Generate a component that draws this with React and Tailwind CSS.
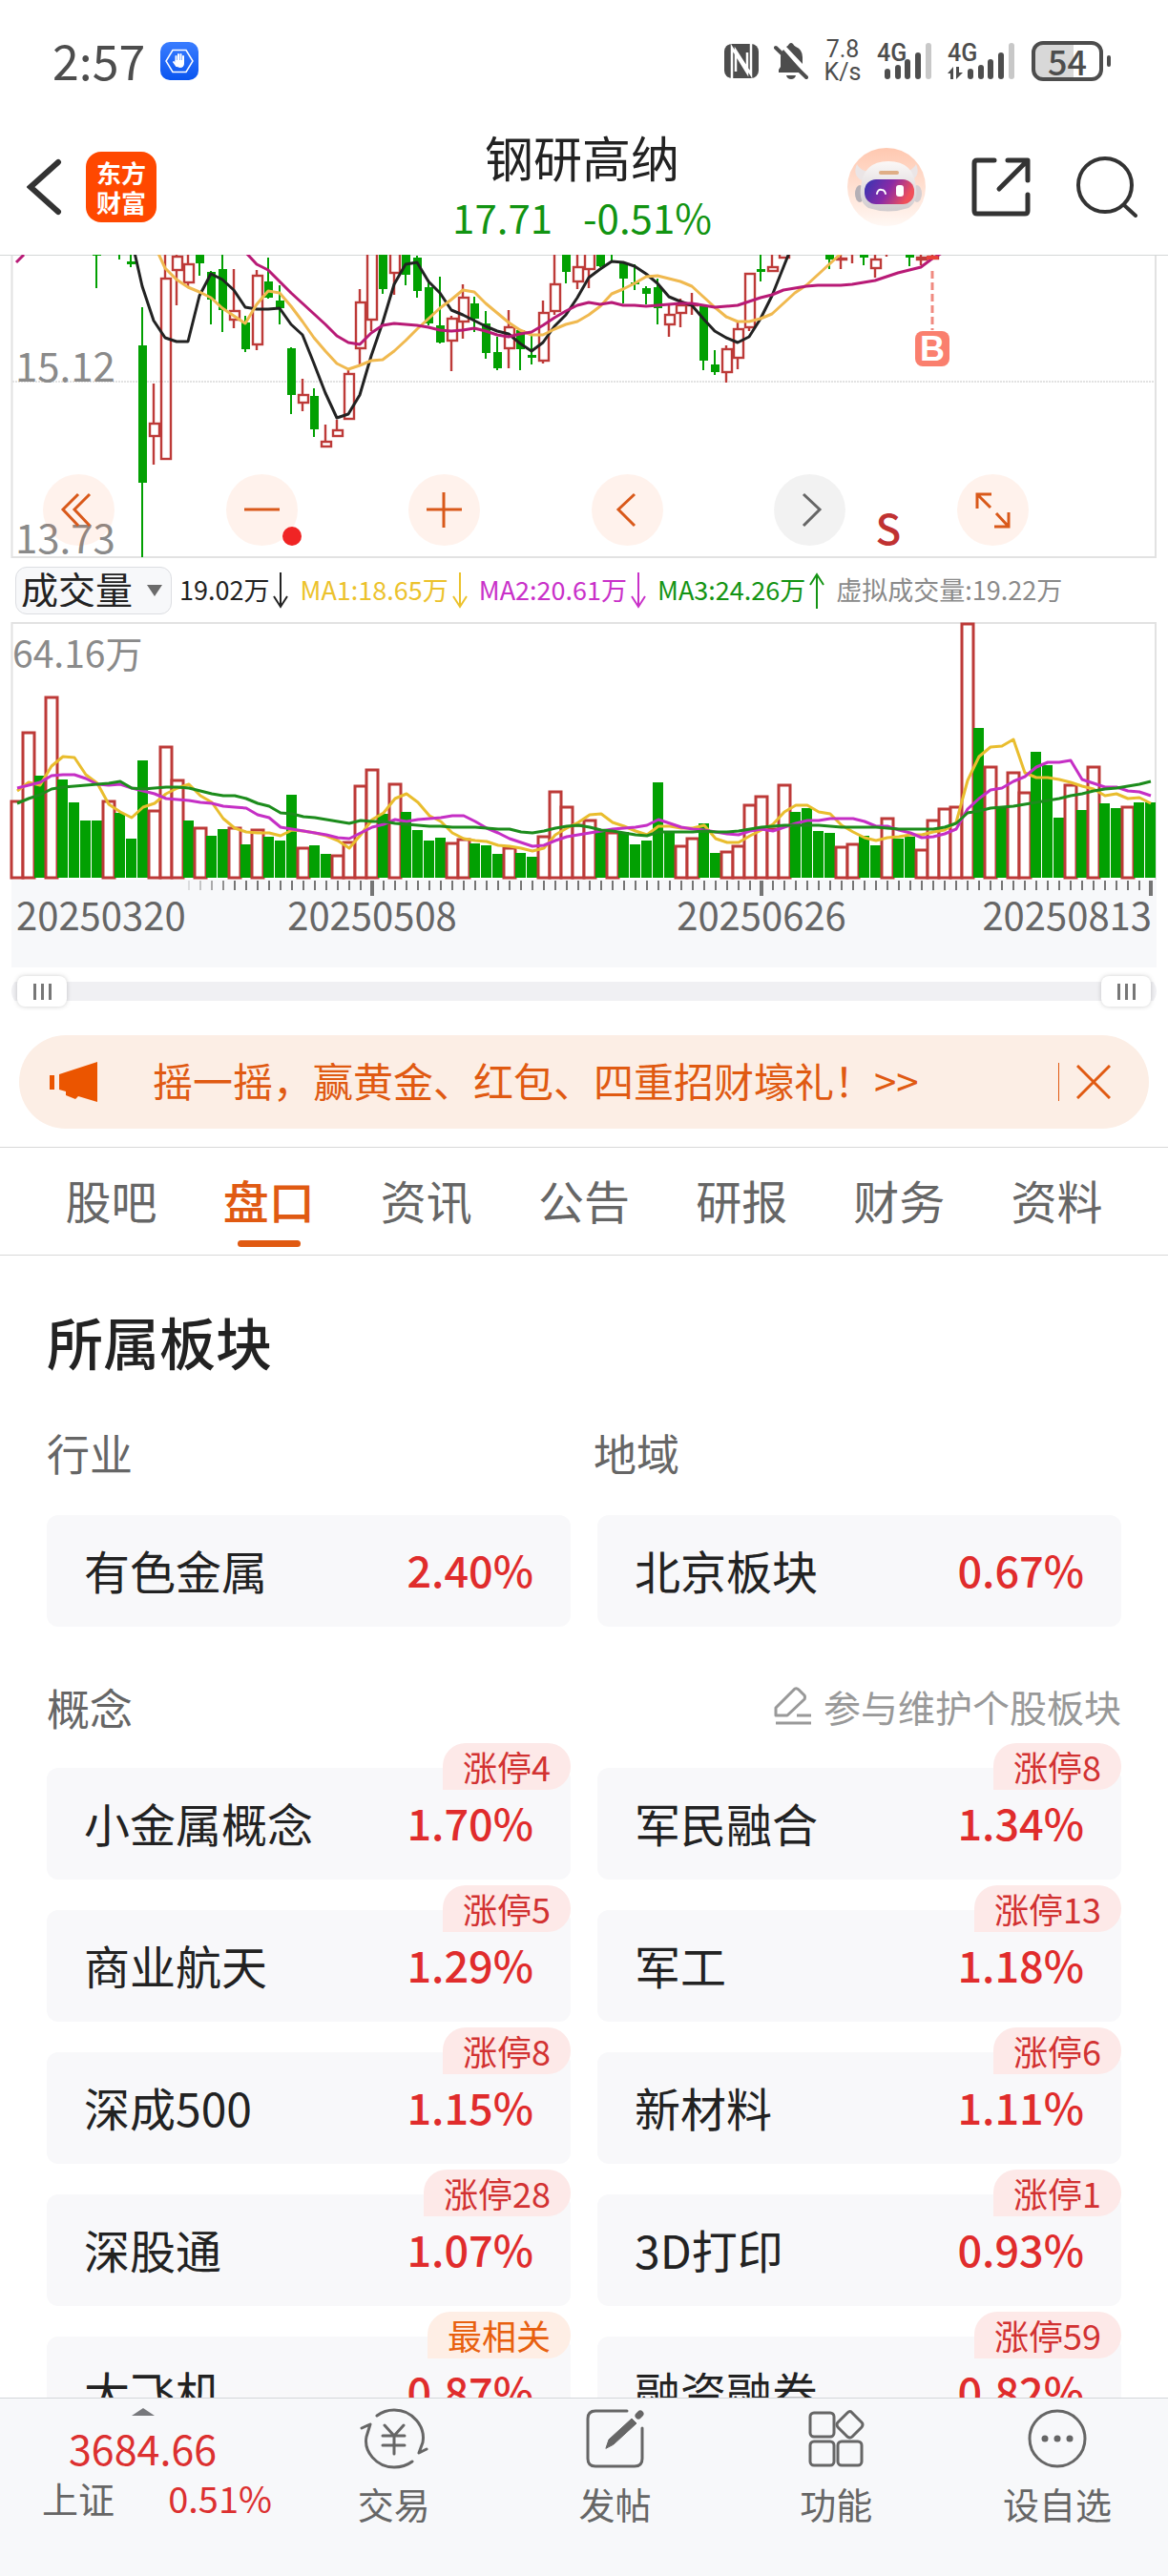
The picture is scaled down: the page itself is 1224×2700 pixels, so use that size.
import { useState } from "react";

// [index, direction, high, bodyTop, bodyBottom, low]
const CANDLES = [
  [7, "g", 250, 250, 268, 302],
  [9, "g", 250, 250, 252, 272],
  [10, "g", 250, 274, 277, 280],
  [11, "g", 322, 362, 506, 584],
  [12, "r", 402, 444, 457, 487],
  [13, "r", 250, 292, 481, 481],
  [14, "r", 250, 269, 283, 320],
  [15, "r", 250, 277, 296, 300],
  [16, "g", 250, 250, 276, 289],
  [17, "g", 284, 285, 314, 340],
  [18, "g", 250, 282, 325, 348],
  [19, "r", 282, 326, 335, 344],
  [20, "g", 331, 338, 366, 369],
  [21, "r", 283, 289, 361, 367],
  [22, "g", 270, 295, 312, 313],
  [23, "g", 299, 315, 323, 340],
  [24, "g", 364, 365, 414, 434],
  [25, "r", 397, 414, 422, 431],
  [26, "g", 407, 415, 450, 458],
  [27, "r", 445, 463, 468, 469],
  [28, "r", 440, 451, 457, 458],
  [29, "r", 388, 392, 439, 439],
  [30, "r", 303, 317, 365, 384],
  [31, "r", 250, 250, 335, 347],
  [32, "g", 250, 250, 303, 308],
  [33, "r", 250, 250, 286, 309],
  [34, "g", 250, 250, 288, 299],
  [35, "g", 268, 270, 305, 312],
  [36, "g", 293, 301, 339, 341],
  [37, "g", 290, 341, 359, 360],
  [38, "r", 331, 334, 357, 389],
  [39, "r", 298, 312, 337, 355],
  [40, "g", 311, 318, 334, 348],
  [41, "g", 326, 339, 370, 376],
  [42, "g", 353, 369, 386, 388],
  [43, "r", 325, 343, 365, 386],
  [44, "g", 345, 346, 366, 388],
  [45, "g", 352, 372, 375, 382],
  [46, "r", 315, 328, 378, 381],
  [47, "r", 250, 298, 326, 330],
  [48, "g", 250, 250, 285, 297],
  [49, "r", 250, 280, 295, 303],
  [50, "r", 250, 250, 282, 302],
  [51, "g", 250, 250, 279, 280],
  [52, "g", 250, 250, 252, 273],
  [53, "g", 274, 275, 292, 318],
  [54, "g", 277, 296, 298, 304],
  [55, "g", 300, 302, 308, 319],
  [56, "g", 292, 301, 323, 340],
  [57, "r", 320, 330, 340, 353],
  [58, "r", 313, 320, 328, 343],
  [59, "r", 307, 319, 320, 330],
  [60, "g", 320, 320, 378, 388],
  [61, "g", 367, 382, 390, 393],
  [62, "r", 362, 366, 390, 401],
  [63, "r", 338, 345, 375, 387],
  [64, "r", 286, 287, 343, 347],
  [65, "g", 250, 282, 285, 295],
  [66, "r", 250, 280, 284, 285],
  [67, "r", 250, 250, 270, 270],
  [71, "g", 250, 250, 272, 282],
  [72, "r", 250, 271, 272, 282],
  [73, "r", 250, 250, 252, 276],
  [74, "g", 250, 250, 270, 278],
  [75, "r", 250, 272, 281, 291],
  [76, "r", 250, 250, 252, 269],
  [78, "g", 250, 250, 270, 279],
  [79, "r", 250, 270, 272, 278],
  [80, "r", 250, 269, 271, 271],
];

const PRICE_LINES = [
  {
    color: "#222222",
    start: 10,
    ys: [247, 300, 336, 354, 358, 358, 310, 287, 293, 304, 322, 324, 324, 323, 340, 351, 381, 412, 438, 434, 414, 373, 338, 298, 277, 275, 295, 307, 325, 330, 336, 342, 347, 350, 360, 368, 359, 342, 330, 312, 291, 282, 274, 275, 279, 287, 297, 311, 316, 320, 334, 347, 354, 359, 353, 334, 310, 280, 250],
  },
  {
    color: "#f0b94f",
    start: 12,
    ys: [255, 281, 293, 301, 306, 312, 323, 331, 339, 319, 305, 307, 321, 337, 354, 368, 381, 387, 383, 378, 377, 368, 357, 345, 334, 323, 314, 304, 306, 318, 328, 338, 346, 351, 351, 345, 340, 337, 330, 321, 308, 303, 297, 290, 289, 292, 295, 300, 311, 322, 332, 337, 337, 334, 329, 318, 307, 299, 288, 277, 266],
  },
  {
    color: "#b81a76",
    start: 20,
    ys: [264, 277, 283, 295, 307, 318, 329, 340, 352, 359, 361, 349, 341, 339, 340, 341, 343, 346, 347, 346, 344, 347, 351, 353, 350, 348, 341, 333, 326, 320, 317, 319, 317, 320, 320, 321, 320, 319, 318, 318, 320, 322, 321, 320, 316, 312, 309, 304, 302, 300, 299, 299, 299, 298, 296, 294, 290, 286, 283, 280, 271, 264],
  },
];

const VOLUME_TOPS = [
  839, 767, 813, 730, 817, 841, 860, 860, 839, 852, 879, 797, 849, 782, 817, 860, 867, 876, 869, 867,
  885, 869, 877, 881, 833, 888, 886, 895, 896, 882, 823, 806, 853, 821, 851, 870, 881, 878, 883, 879,
  884, 886, 895, 888, 894, 898, 876, 829, 845, 864, 859, 871, 872, 872, 885, 881, 820, 872, 886, 878,
  863, 894, 892, 886, 843, 834, 868, 822, 851, 847, 871, 873, 887, 884, 876, 886, 857, 879, 877, 890,
  859, 847, 845, 653, 763, 803, 845, 809, 830, 788, 802, 857, 822, 849, 803, 842, 847, 845, 841, 841,
];

const VOLUME_DIRS =
  "rrgrggggrg" +
  "ggrrrgrggr" +
  "grgggrggrr" +
  "rrgrggggrr" +
  "gggrggrrrr" +
  "rgrggggg" +
  "rrggrrrrrr" +
  "ggggrrggrg" +
  "grrrrrgrgr" +
  "rgggrgrggrgg";

const VOLUME_LINES = [
  {
    color: "#e9bd2e",
    ys: [829, 820, 823, 803, 793, 794, 812, 821, 843, 851, 857, 846, 842, 832, 826, 822, 834, 841, 858, 868, 872, 873, 873, 876, 870, 871, 873, 876, 881, 889, 875, 859, 852, 837, 832, 841, 855, 861, 873, 879, 881, 882, 886, 887, 889, 892, 889, 875, 868, 862, 854, 853, 862, 866, 871, 875, 866, 866, 868, 868, 865, 879, 883, 883, 876, 870, 864, 851, 844, 844, 851, 853, 865, 872, 878, 881, 878, 877, 875, 875, 872, 870, 862, 818, 793, 783, 782, 775, 810, 815, 815, 817, 820, 824, 827, 834, 832, 837, 836, 842],
  },
  {
    color: "#c52fc5",
    ys: [826, 823, 820, 813, 812, 812, 816, 822, 823, 822, 826, 829, 832, 837, 838, 839, 841, 842, 845, 846, 847, 854, 857, 867, 869, 871, 873, 875, 878, 879, 873, 867, 864, 859, 861, 859, 858, 857, 855, 855, 861, 868, 873, 879, 883, 887, 886, 881, 877, 875, 873, 871, 869, 868, 867, 865, 859, 863, 867, 869, 870, 872, 874, 875, 871, 869, 871, 867, 863, 860, 860, 858, 858, 858, 861, 866, 866, 870, 873, 878, 877, 874, 869, 848, 837, 828, 826, 819, 814, 804, 799, 799, 797, 817, 821, 825, 825, 829, 830, 834],
  },
  {
    color: "#1c8c1c",
    ys: [842, 837, 833, 827, 825, 824, 823, 822, 821, 819, 826, 827, 826, 825, 825, 826, 829, 832, 834, 834, 837, 842, 845, 852, 853, 856, 857, 859, 861, 863, 860, 861, 861, 863, 864, 865, 866, 866, 867, 867, 867, 868, 869, 869, 872, 873, 871, 868, 866, 865, 867, 870, 871, 873, 875, 876, 872, 872, 872, 872, 871, 872, 872, 871, 869, 867, 866, 865, 865, 865, 865, 866, 867, 867, 867, 867, 868, 869, 869, 869, 869, 867, 863, 852, 850, 847, 846, 845, 843, 841, 839, 837, 834, 832, 829, 827, 826, 824, 822, 819],
  },
];

const TABS = ["股吧", "盘口", "资讯", "公告", "研报", "财务", "资料"];

const CONCEPTS = [
  { name: "小金属概念", change: "1.70%", tag: "涨停4" },
  { name: "军民融合", change: "1.34%", tag: "涨停8" },
  { name: "商业航天", change: "1.29%", tag: "涨停5" },
  { name: "军工", change: "1.18%", tag: "涨停13" },
  { name: "深成500", change: "1.15%", tag: "涨停8" },
  { name: "新材料", change: "1.11%", tag: "涨停6" },
  { name: "深股通", change: "1.07%", tag: "涨停28" },
  { name: "3D打印", change: "0.93%", tag: "涨停1" },
  { name: "大飞机", change: "0.87%", tag: "最相关", hot: true },
  { name: "融资融券", change: "0.82%", tag: "涨停59" },
];

const RED = "#bd3a38";
const GREEN = "#02a002";

const toPoints = (ys, offset, start = 0) =>
  ys.map((y, i) => `${offset + 12 * (start + i)},${y}`).join(" ");

function SignalBars({ x }) {
  return (
    <g transform={`translate(${x} 0)`}>
      <rect x="0" y="28" width="6" height="11" rx="3" />
      <rect x="11" y="24" width="6" height="15" rx="3" />
      <rect x="21" y="18" width="6" height="21" rx="3" />
      <rect x="32" y="11" width="6" height="28" rx="3" />
      <rect x="43" y="1" width="6" height="38" rx="3" fill="#c8c8c8" />
    </g>
  );
}

function StatusBar() {
  return (
    <div className="flex h-[124px] items-center justify-between pt-1 pr-[60px] pl-[55px] text-[#4d4d4d]">
      <div className="flex items-center gap-4">
        <span className="pb-1 text-[50px] leading-none">2:57</span>
        <svg viewBox="0 0 40 40" className="size-10">
          <defs>
            <linearGradient id="blue" x1="0" y1="0" x2="0" y2="1">
              <stop offset="0" stopColor="#3a7dff" />
              <stop offset="1" stopColor="#0a55f0" />
            </linearGradient>
          </defs>
          <rect width="40" height="40" rx="10" fill="url(#blue)" />
          <path d="M13 8.500h14L34 20l-7 11.500H13L6 20z" fill="none" stroke="#fff" strokeWidth="1.500" />
          <path
            d="M16.500 21v-6M19 20v-7M21.500 20v-7M24 21v-6M14 21l3 4h6l1-4"
            stroke="#fff"
            strokeWidth="2"
            strokeLinecap="round"
            fill="none"
          />
          <path d="M15.500 19h9.500v3q0 5-4.500 5-3 0-5-3z" fill="#fff" />
        </svg>
      </div>
      <div className="flex items-center gap-4">
        <svg viewBox="0 0 36 36" className="size-9">
          <rect width="36" height="36" rx="8" fill="#4d4d4d" />
          <path d="M8 36V4l16 26V9M28 0v32L12 7v22" fill="none" stroke="#fff" strokeWidth="2.500" />
        </svg>
        <svg viewBox="0 0 36 40" className="h-10 w-9" fill="#4d4d4d">
          <path d="M5 29l2-3V15q0-4 3-7l21 24H5zM13 5q2-1 3-3 2-2 4 0 1 2 3 3 7 3 7 11v7z" />
          <path d="M13 35h10q-1 4-5 4t-5-4z" />
          <path d="M2 6l32 31" stroke="#4d4d4d" strokeWidth="4" strokeLinecap="round" />
        </svg>
        <div className="flex w-10 flex-col items-center font-['Roboto'] text-[25px] leading-[24px]">
          <span>7.8</span>
          <span>K/s</span>
        </div>
        <svg viewBox="0 0 58 40" className="h-10 w-[58px] overflow-visible" fill="#4d4d4d">
          <text x="0" y="20" fontSize="25" fontWeight="500" className="font-['Roboto']">
            4G
          </text>
          <SignalBars x={8} />
        </svg>
        <svg viewBox="0 0 72 40" className="h-10 w-[72px] overflow-visible" fill="#4d4d4d">
          <text x="0" y="20" fontSize="25" fontWeight="500" className="font-['Roboto']">
            4G
          </text>
          <path d="M0 33l6-7v13H3v-6zM9 26h3v6h4l-7 7z" />
          <SignalBars x={21} />
        </svg>
        <div className="flex items-center gap-1">
          <div className="h-[42px] w-[75px] rounded-xl border-4 border-[#4d4d4d] bg-[linear-gradient(90deg,#d8d8d8_60%,#ffffff_60%)] text-center text-[36px] leading-[32px] font-medium">
            54
          </div>
          <div className="h-3 w-1 rounded-full bg-[#4d4d4d]" />
        </div>
      </div>
    </div>
  );
}

function RobotIcon() {
  return (
    <svg viewBox="0 0 82 82" className="size-[82px]">
      <defs>
        <linearGradient id="peach" x1="0" y1="0" x2="0" y2="1">
          <stop offset="0" stopColor="#ffc8b0" />
          <stop offset="1" stopColor="#fff8f4" />
        </linearGradient>
        <linearGradient id="visor" x1="0" y1="0" x2="1" y2="0.300">
          <stop offset="0" stopColor="#3236b4" />
          <stop offset="0.550" stopColor="#8a2aa6" />
          <stop offset="1" stopColor="#f0505a" />
        </linearGradient>
        <linearGradient id="shell" x1="0" y1="0" x2="0" y2="1">
          <stop offset="0" stopColor="#fbf8f7" />
          <stop offset="1" stopColor="#d0cbce" />
        </linearGradient>
      </defs>
      <circle cx="41" cy="41" r="41" fill="url(#peach)" />
      <path d="M10 17q-5 12 5 17l9-9q-11-1-14-8zM72 17q5 12-5 17l-9-9q11-1 14-8z" fill="#ebe5e6" />
      <ellipse cx="13" cy="48" rx="5" ry="9" fill="#b5b0b6" />
      <ellipse cx="73" cy="48" rx="5" ry="9" fill="#d5cfd2" />
      <path d="M14 42Q16 14 43 14t29 28q2 15-8 21-21 7-42 0-10-6-8-21z" fill="url(#shell)" />
      <rect x="33" y="24" width="21" height="4" rx="2" fill="#dfae86" />
      <rect x="18" y="33" width="52" height="26" rx="12" fill="url(#visor)" />
      <path d="M31 48q1-5 5-4 3 0 4 4" fill="none" stroke="#fff" strokeWidth="2" strokeLinecap="round" />
      <rect x="51" y="39" width="8" height="12" rx="3" fill="#fff" />
    </svg>
  );
}

function Header() {
  return (
    <header className="grid h-[143px] grid-cols-[1fr_auto_1fr] items-center pr-8 pl-7">
      <div className="flex items-center gap-6">
        <button aria-label="返回">
          <svg viewBox="0 0 38 60" className="h-[60px] w-[38px]" fill="none" stroke="#333" strokeWidth="6" strokeLinecap="round">
            <path d="M33 4L4 30l29 26" />
          </svg>
        </button>
        <a
          href="#home"
          className="flex size-[74px] flex-col items-center justify-center rounded-2xl bg-[#ff4800] text-[26px] leading-[31px] font-bold text-white"
        >
          <span>东方</span>
          <span>财富</span>
        </a>
      </div>
      <div className="pb-1 text-center">
        <h1 className="text-[51px] leading-[66px] text-[#222]">钢研高纳</h1>
        <p className="flex justify-center gap-8 text-[42px] leading-[60px] text-[#129412]">
          <span>17.71</span>
          <span>-0.51%</span>
        </p>
      </div>
      <div className="flex items-center justify-end gap-12">
        <button aria-label="智能助手">
          <RobotIcon />
        </button>
        <button aria-label="分享">
          <svg viewBox="0 0 62 62" className="size-[62px]" fill="none" stroke="#333" strokeWidth="5" strokeLinecap="round" strokeLinejoin="round">
            <path d="M24 3H6Q3 3 3 6v50q0 3 3 3h50q3 0 3-3V39M38 3h21v21M58 4L29 33" />
          </svg>
        </button>
        <button aria-label="搜索">
          <svg viewBox="0 0 64 64" className="size-16" fill="none" stroke="#333" strokeWidth="4" strokeLinecap="round">
            <circle cx="30" cy="30" r="28" />
            <path d="M50 51l12 11" />
          </svg>
        </button>
      </div>
    </header>
  );
}

function Candle({ data }) {
  const [i, dir, high, top, bottom, low] = data;
  const x = 17 + 12 * i;
  if (dir === "g") {
    return (
      <g fill={GREEN}>
        <rect x={x - 1} y={high} width="2" height={low - high} />
        <rect x={x - 4} y={top} width="9" height={bottom - top} />
      </g>
    );
  }
  return (
    <g stroke={RED} strokeWidth="2.400" fill="none">
      <path d={`M${x} ${high}V${top}M${x} ${bottom}V${low}`} />
      <rect x={x - 4} y={top} width="10" height={bottom - top} />
    </g>
  );
}

function PriceChart() {
  return (
    <svg viewBox="0 267 1224 318" className="block w-full">
      <path d="M0 267.500H1224" stroke="#d4d8d8" strokeWidth="1" />
      <path d="M12.500 268V584H1211V268" fill="none" stroke="#e2e2e2" strokeWidth="2" />
      <path d="M13 400H1210" stroke="#e2e2e2" strokeWidth="2" strokeDasharray="2 1" />
      {CANDLES.map((c) => (
        <Candle key={c[0]} data={c} />
      ))}
      <path d="M17 275L25 267" stroke="#b81a76" strokeWidth="3" />
      {PRICE_LINES.map((line) => (
        <polyline
          key={line.color}
          points={toPoints(line.ys, 17, line.start)}
          fill="none"
          stroke={line.color}
          strokeWidth="3"
          strokeLinejoin="round"
        />
      ))}
      <rect x="971" y="268" width="12" height="4" fill="#e84038" />
      <path d="M977 284V346" stroke="#f08a80" strokeWidth="3" strokeDasharray="8 4" />
      <rect x="959" y="347" width="36" height="37" rx="8" fill="#fa7f6e" />
      <text x="977" y="378" textAnchor="middle" fontSize="36" fontWeight="700" fill="#fff" className="font-['Liberation_Sans']">
        B
      </text>
      <g fontSize="42" fill="#8a8a8a">
        <text x="16" y="400">15.12</text>
        <text x="16" y="580">13.73</text>
      </g>
      <text x="931" y="571" textAnchor="middle" fontSize="44" fontWeight="500" fill="#c03232">
        S
      </text>
    </svg>
  );
}

const CHART_TOOLS = [
  { label: "最左", d: "M37 21L21 37l16 17M49 21L33 37l16 17" },
  { label: "缩小", d: "M19 37h37", dot: true },
  { label: "放大", d: "M19 37h37M37 19v37" },
  { label: "左移", d: "M45 21L28 37l17 17" },
  { label: "右移", d: "M31 21l17 16-17 17", muted: true },
  { label: "全屏", d: "M21 36V21h15M22 22l13 13M39 55h15V40M53 54L41 41" },
];

function ChartTools() {
  return (
    <div className="absolute right-[146px] bottom-[13px] left-[45px] flex justify-between">
      {CHART_TOOLS.map((tool) => (
        <button
          key={tool.label}
          aria-label={tool.label}
          className={
            tool.muted
              ? "relative size-[75px] rounded-full bg-black/5 text-[#666]"
              : "relative size-[75px] rounded-full bg-[#ff5a10]/8 text-[#d9591a]"
          }
        >
          <svg viewBox="0 0 75 75" className="size-full" fill="none" stroke="currentColor" strokeWidth="3">
            <path d={tool.d} />
          </svg>
          {tool.dot && <span className="absolute -right-1 bottom-0 size-5 rounded-full bg-[#f02424]" />}
        </button>
      ))}
    </div>
  );
}

function Arrow({ up }) {
  return (
    <svg viewBox="0 0 16 40" className="h-10 w-4" fill="none" stroke="currentColor" strokeWidth="2">
      <path d={up ? "M8 39V3M1 14l7-11 7 11" : "M8 1v36M1 26l7 11 7-11"} />
    </svg>
  );
}

function IndicatorRow() {
  return (
    <div className="flex h-[67px] items-center gap-3 pl-4 text-[27px] whitespace-nowrap">
      <div className="relative -mr-1 h-[50px] w-[164px]">
        <label htmlFor="indicator" className="sr-only">
          指标
        </label>
        <select
          id="indicator"
          className="size-full appearance-none rounded-xl border border-[#dcdee2] bg-[#f7f8fa] pb-1 pl-[5px] text-[39px] leading-none text-[#222]"
        >
          <option>成交量</option>
        </select>
        <svg viewBox="0 0 16 12" className="pointer-events-none absolute top-[19px] right-[10px] h-3 w-4" fill="#6b6b6b">
          <path d="M0 0h16L8 12z" />
        </svg>
      </div>
      <span className="flex items-center gap-1 text-[#222]">
        19.02万
        <Arrow />
      </span>
      <span className="flex items-center gap-1 text-[#ecc22c]">
        MA1:18.65万
        <Arrow />
      </span>
      <span className="flex items-center gap-1 text-[#c931c9]">
        MA2:20.61万
        <Arrow />
      </span>
      <span className="flex items-center gap-1 text-[#149414]">
        MA3:24.26万
        <Arrow up />
      </span>
      <span className="text-[#8a8a8a]">虚拟成交量:19.22万</span>
    </div>
  );
}

function VolumeChart() {
  return (
    <svg viewBox="0 652 1224 363" className="block w-full">
      <rect x="12" y="922" width="1200" height="92" fill="#f7f8fa" />
      <path d="M12.500 922V653H1211V922" fill="none" stroke="#e2e2e2" strokeWidth="2" />
      <text x="13" y="700" fontSize="39" fill="#8a8a8a">
        64.16万
      </text>
      {VOLUME_TOPS.map((top, i) =>
        VOLUME_DIRS[i] === "g" ? (
          <rect key={i} x={12 + 12 * i} y={top} width="11" height={920 - top} fill={GREEN} />
        ) : (
          <rect
            key={i}
            x={12 + 12 * i}
            y={top + 1}
            width="12"
            height={919 - top}
            fill="#fff"
            stroke={RED}
            strokeWidth="3"
          />
        )
      )}
      {VOLUME_LINES.map((line) => (
        <polyline
          key={line.color}
          points={toPoints(line.ys, 18)}
          fill="none"
          stroke={line.color}
          strokeWidth="3"
          strokeLinejoin="round"
        />
      ))}
      {VOLUME_TOPS.map((_, i) => {
        if (i < 15) return null;
        const major = i === 31 || i === 65 || i === 99;
        return (
          <rect
            key={i}
            x={major ? 16 + 12 * i : 17 + 12 * i}
            y="923"
            width={major ? 4 : 2}
            height={major ? 16 : 10}
            fill="#757575"
            opacity={Math.min(1, (i - 14) / 5)}
          />
        );
      })}
      <g fontSize="40" fill="#666">
        <text x="17" y="975">20250320</text>
        <text x="390" y="975" textAnchor="middle">20250508</text>
        <text x="798" y="975" textAnchor="middle">20250626</text>
        <text x="1207" y="975" textAnchor="end">20250813</text>
      </g>
    </svg>
  );
}

const THUMB =
  "pointer-events-none absolute inset-0 m-0 h-8 w-full appearance-none bg-transparent [&::-webkit-slider-thumb]:pointer-events-auto [&::-webkit-slider-thumb]:h-8 [&::-webkit-slider-thumb]:w-[52px] [&::-webkit-slider-thumb]:appearance-none [&::-webkit-slider-thumb]:rounded-lg [&::-webkit-slider-thumb]:bg-white [&::-webkit-slider-thumb]:bg-[linear-gradient(90deg,#777_3px,transparent_3px_8px,#777_8px_11px,transparent_11px_16px,#777_16px)] [&::-webkit-slider-thumb]:bg-[length:19px_17px] [&::-webkit-slider-thumb]:bg-center [&::-webkit-slider-thumb]:bg-no-repeat [&::-webkit-slider-thumb]:shadow-[0_0_5px_rgba(0,0,0,0.2)]";

function RangeBar() {
  const [from, setFrom] = useState(0);
  const [to, setTo] = useState(100);
  return (
    <div className="mx-3 mt-2 flex h-8 items-center rounded-full bg-[linear-gradient(#f0f0f3,#f0f0f3)] bg-[length:100%_20px] bg-center bg-no-repeat px-[6px]">
      <div className="relative h-8 flex-1">
        <input
          type="range"
          aria-label="开始日期"
          value={from}
          onChange={(e) => setFrom(e.target.value)}
          className={THUMB}
        />
        <input
          type="range"
          aria-label="结束日期"
          value={to}
          onChange={(e) => setTo(e.target.value)}
          className={THUMB}
        />
      </div>
    </div>
  );
}

function Banner() {
  return (
    <div className="mx-5 mt-[30px] mb-[19px] flex h-[98px] items-center rounded-full bg-[#fceee5] pr-10 pl-8 text-[#e05a12]">
      <svg viewBox="0 0 50 42" className="h-[42px] w-[50px]" fill="#eb5500">
        <path d="M0 14h5v15H0zM10 13L50 0v42l-20-6-3 3-10-4v-4l-7-2z" />
      </svg>
      <a href="#promo" className="ml-[58px] flex-1 pb-1 text-[42px] leading-[60px] whitespace-nowrap">
        摇一摇，赢黄金、红包、四重招财壕礼！&gt;&gt;
      </a>
      <span className="mr-[18px] h-10 w-px bg-[#e05a12]" />
      <button aria-label="关闭">
        <svg viewBox="0 0 36 36" className="size-9" fill="none" stroke="currentColor" strokeWidth="3">
          <path d="M1 1l34 34M35 1L1 35" />
        </svg>
      </button>
    </div>
  );
}

function Tabs() {
  const [active, setActive] = useState("盘口");
  return (
    <div role="tablist" className="grid h-[114px] grid-cols-7 border-y border-[#d8d8d8] px-[34px]">
      {TABS.map((tab) => (
        <button
          key={tab}
          role="tab"
          aria-selected={tab === active}
          onClick={() => setActive(tab)}
          className={
            tab === active
              ? "relative pb-1 text-[48px] leading-[60px] font-medium text-[#e05a12]"
              : "relative pb-1 text-[48px] leading-[60px] text-[#666]"
          }
        >
          {tab}
          {tab === active && (
            <span className="absolute inset-x-0 bottom-2 mx-auto h-[7px] w-[66px] rounded-full bg-[#e05a12]" />
          )}
        </button>
      ))}
    </div>
  );
}

function BoardCard({ name, change, tag, hot }) {
  return (
    <a
      href="#board"
      className="relative flex h-[117px] items-center justify-between rounded-xl bg-[#f8f8fa] px-[39px] pb-1 leading-[60px]"
    >
      <span className="text-[48px] text-[#222]">{name}</span>
      <span className="text-[45px] font-medium text-[#e02c2c]">{change}</span>
      {tag && (
        <span
          className={
            hot
              ? "absolute -top-[26px] right-0 rounded-3xl rounded-bl-none bg-[#feeee5] px-[21px] text-[36px] leading-[49px] text-[#e8600f]"
              : "absolute -top-[26px] right-0 rounded-3xl rounded-bl-none bg-[#fde9e8] px-[21px] text-[36px] leading-[49px] text-[#d23232]"
          }
        >
          {tag}
        </span>
      )}
    </a>
  );
}

function Boards() {
  return (
    <section className="px-[49px] pt-[60px] pb-8">
      <h2 className="text-[59px] leading-[60px] font-medium text-[#222]">所属板块</h2>
      <div className="mt-[62px] grid grid-cols-2 gap-x-5">
        <h3 className="text-[45px] leading-[50px] text-[#666]">行业</h3>
        <h3 className="text-[45px] leading-[50px] text-[#666]">地域</h3>
      </div>
      <div className="mt-10 grid grid-cols-2 gap-x-7">
        <BoardCard name="有色金属" change="2.40%" />
        <BoardCard name="北京板块" change="0.67%" />
      </div>
      <div className="mt-[58px] flex items-center justify-between leading-[50px]">
        <h3 className="text-[45px] text-[#666]">概念</h3>
        <a href="#edit" className="flex items-center gap-3 pb-1 text-[39px] text-[#999]">
          <svg viewBox="0 0 40 40" className="size-10" fill="none" stroke="currentColor" strokeWidth="3" strokeLinejoin="round">
            <path d="M2 22L22 2q2-1 4 1l6 6q1 2 0 4L14 30H2zM24 30h15M2 38h37" />
          </svg>
          参与维护个股板块
        </a>
      </div>
      <div className="mt-9 grid grid-cols-2 gap-x-7 gap-y-8">
        {CONCEPTS.map((item) => (
          <BoardCard key={item.name} {...item} />
        ))}
      </div>
    </section>
  );
}

function NavItem({ label, children }) {
  return (
    <button className="flex flex-1 flex-col items-center gap-2 pt-[10px] text-[38px] leading-[56px] text-[#666]">
      <svg
        viewBox="0 0 72 64"
        className="h-16 w-[72px]"
        fill="none"
        stroke="currentColor"
        strokeWidth="3"
        strokeLinecap="round"
        strokeLinejoin="round"
      >
        {children}
      </svg>
      <span>{label}</span>
    </button>
  );
}

function BottomNav() {
  return (
    <nav className="flex h-[187px] shrink-0 border-t border-[#d4d6da] bg-[#f7f8fa]">
      <a href="#index" className="flex w-[297px] flex-col pt-[10px] pr-3 pl-11 text-[#dc3030]">
        <svg viewBox="0 0 24 8" className="ml-[94px] h-2 w-6" fill="#77787c">
          <path d="M0 8L12 0l12 8z" />
        </svg>
        <span className="ml-7 text-[43px] leading-[66px]">3684.66</span>
        <span className="flex items-center justify-between text-[38px] leading-[40px]">
          <span className="text-[#666]">上证</span>
          <span>0.51%</span>
        </span>
      </a>
      <NavItem label="交易">
        <path d="M18 8Q26 2 36 2c20 0 33 18 30 34l-4 11 8-4M55 56q-8 6-19 6C17 62 4 45 7 30l4-13-9 4" />
        <path d="M26 18l10 11 10-11M24 29h23M24 39h23M36 29v19" />
      </NavItem>
      <NavItem label="发帖">
        <path d="M48 3H15q-8 0-8 8v42q0 8 8 8h41q8 0 8-8V21" />
        <path d="M26 42l3-9 24-22 5 5-24 22z" fill="currentColor" strokeWidth="1" />
        <path d="M60 8l2-2" strokeWidth="7" />
      </NavItem>
      <NavItem label="功能">
        <rect x="9" y="5" width="25" height="25" rx="4" />
        <rect x="9" y="35" width="25" height="25" rx="4" />
        <rect x="38" y="35" width="25" height="25" rx="4" />
        <path d="M48 5q3-3 5 0l10 10q2 2 0 5L53 30q-2 2-5 0L38 20q-2-3 0-5z" />
      </NavItem>
      <NavItem label="设自选">
        <circle cx="36" cy="32" r="29" />
        <g fill="currentColor" stroke="none">
          <circle cx="23" cy="32" r="3.500" />
          <circle cx="36" cy="32" r="3.500" />
          <circle cx="49" cy="32" r="3.500" />
        </g>
      </NavItem>
    </nav>
  );
}

export default function App() {
  return (
    <div className="flex h-screen flex-col bg-white font-['Noto_Sans_CJK_SC',sans-serif]">
      <StatusBar />
      <Header />
      <main className="min-h-0 flex-1 overflow-y-auto [scrollbar-width:none]">
        <div className="relative">
          <PriceChart />
          <ChartTools />
        </div>
        <IndicatorRow />
        <VolumeChart />
        <RangeBar />
        <Banner />
        <Tabs />
        <Boards />
      </main>
      <BottomNav />
    </div>
  );
}
